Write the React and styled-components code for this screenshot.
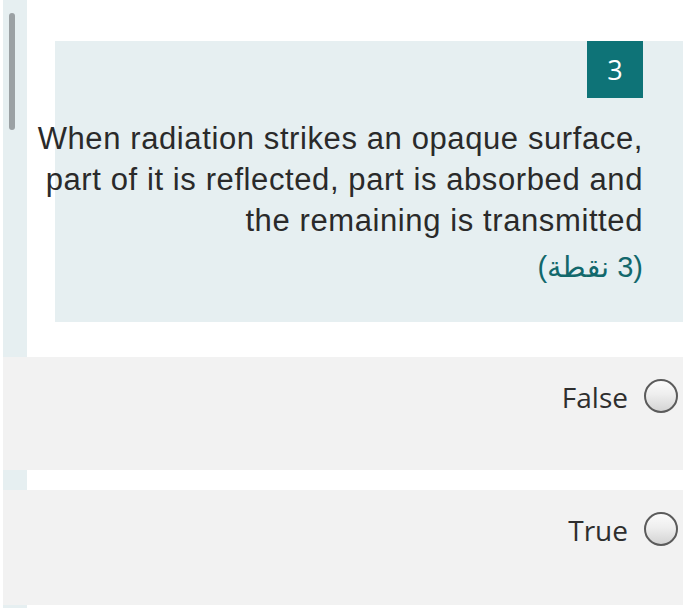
import React from "react";
import styled, { createGlobalStyle } from "styled-components";

const Global = createGlobalStyle`
  html, body { margin: 0; padding: 0; background: #ffffff; }
  body { width: 700px; height: 608px; overflow: hidden; }
`;

const Page = styled.div`
  position: relative;
  margin-left: 3px;
  width: 680px;
  height: 608px;
  background: linear-gradient(to right, #e6eff1 0, #e6eff1 24px, #ffffff 24px);
`;

const ScrollThumb = styled.div`
  position: absolute;
  left: 6px;
  top: 13px;
  width: 6px;
  height: 117px;
  border-radius: 3px;
  background: #9ba1a4;
`;

const QuestionSection = styled.section`
  padding: 41px 0 35px 52px;
`;

const QuestionCard = styled.div`
  height: 281px;
  box-sizing: border-box;
  background: #e6eff1;
  padding: 0 40px 0 0;
  display: flex;
  flex-direction: column;
  align-items: flex-end;
`;

const Badge = styled.div`
  width: 56px;
  height: 57px;
  background: #0e7377;
  color: #ffffff;
  display: flex;
  align-items: center;
  justify-content: center;
  font-family: "Open Sans", "Noto Sans", sans-serif;
  font-size: 27px;
`;

const QuestionText = styled.p`
  margin: 20px 0 0 -30px;
  align-self: stretch;
  text-align: right;
  font-family: "Liberation Sans", Arial, sans-serif;
  font-size: 31px;
  letter-spacing: 0.6px;
  line-height: 41px;
  color: #2a2a2a;
`;

const Points = styled.div`
  margin-top: 8px;
  font-family: "Liberation Sans", "DejaVu Sans", "Noto Sans", sans-serif;
  font-size: 29px;
  line-height: 36px;
  color: #12686c;
`;

const AnswerRow = styled.label`
  display: flex;
  justify-content: flex-end;
  align-items: flex-start;
  gap: 16px;
  box-sizing: border-box;
  height: ${(p) => p.$h}px;
  margin-bottom: ${(p) => p.$mb}px;
  padding: 22px 5px 0 0;
  background: #f2f2f2;
`;

const AnswerText = styled.span`
  font-family: "Open Sans", "Noto Sans", sans-serif;
  font-size: 28px;
  line-height: 36px;
  color: #2e2e2e;
`;

const Radio = styled.span`
  width: 34px;
  height: 34px;
  box-sizing: border-box;
  border-radius: 50%;
  border: 2px solid #5b5b5b;
  background: linear-gradient(to bottom, #fbfbfb 0%, #eeeeee 45%, #d4d4d4 100%);
`;

export default function App() {
  return (
    <>
      <Global />
      <Page>
        <ScrollThumb />
        <QuestionSection>
          <QuestionCard>
            <Badge>3</Badge>
            <QuestionText>
              When radiation strikes an opaque surface, part of it is reflected, part is absorbed and
              the remaining is transmitted
            </QuestionText>
            <Points dir="rtl">(3 نقطة)</Points>
          </QuestionCard>
        </QuestionSection>
        <AnswerRow $h={113} $mb={20}>
          <AnswerText>False</AnswerText>
          <Radio />
        </AnswerRow>
        <AnswerRow $h={115} $mb={0}>
          <AnswerText>True</AnswerText>
          <Radio />
        </AnswerRow>
      </Page>
    </>
  );
}
